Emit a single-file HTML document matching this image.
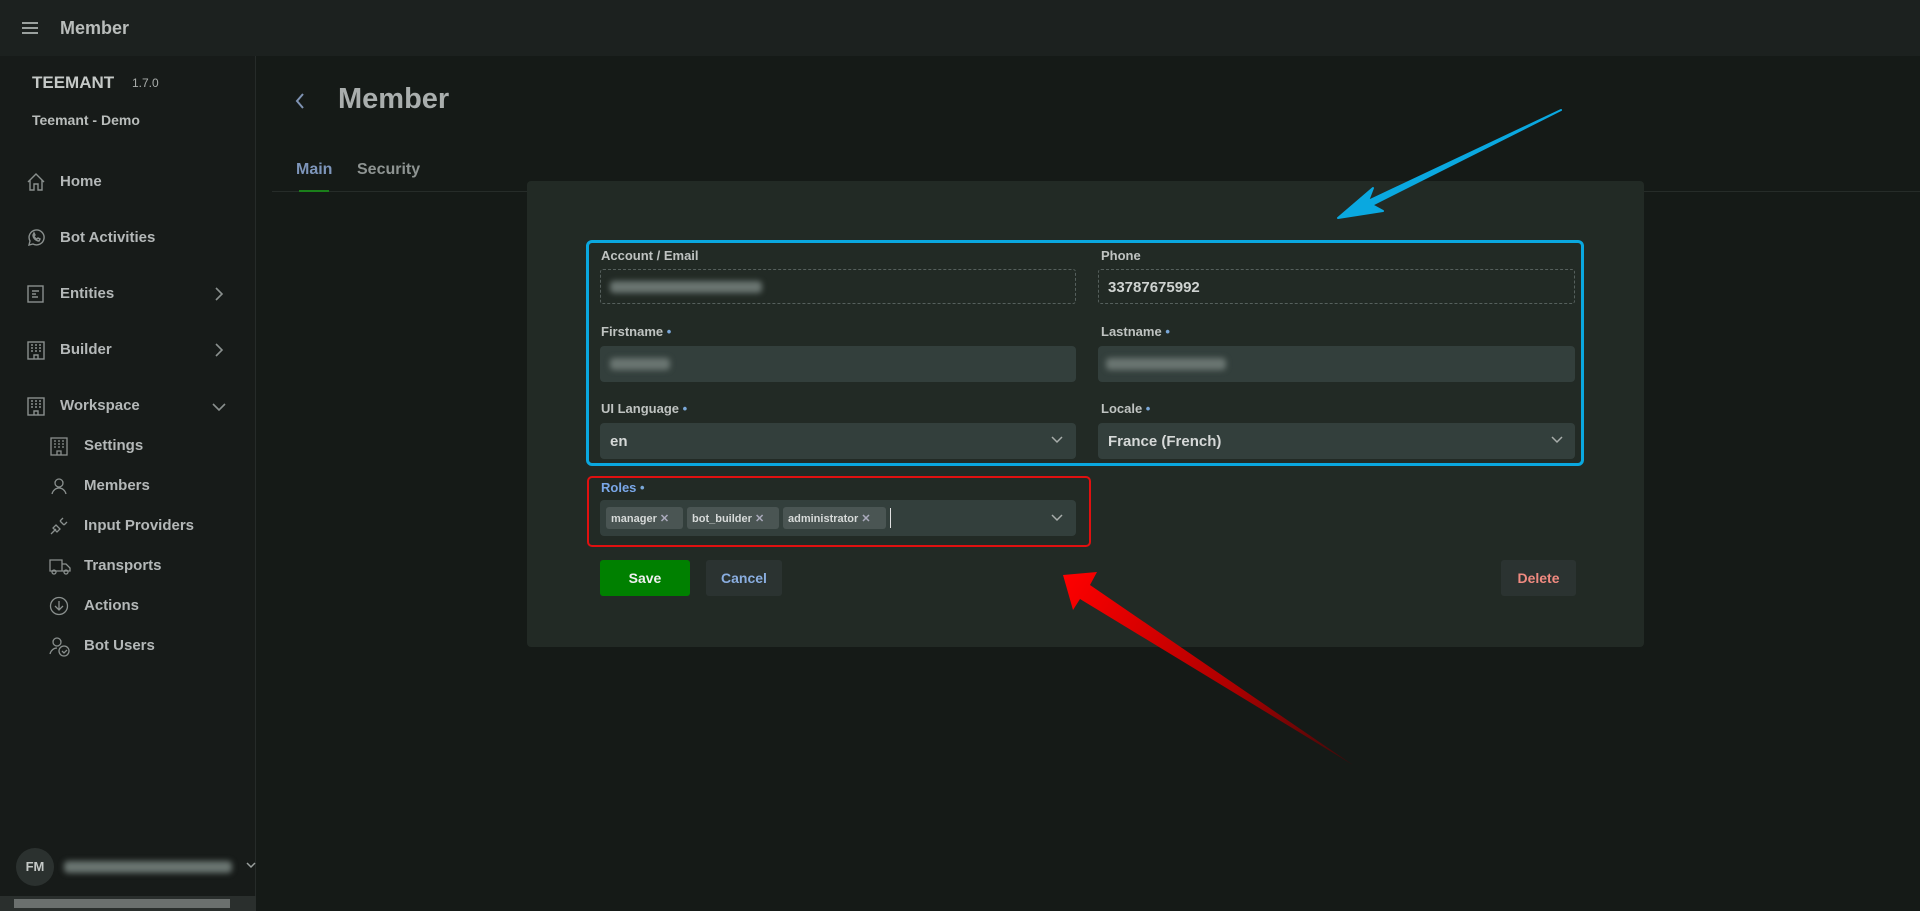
<!DOCTYPE html>
<html><head><meta charset="utf-8"><style>
*{box-sizing:border-box;margin:0;padding:0}
body{width:1920px;height:911px;overflow:hidden;background:#151a17;font-family:"Liberation Sans",sans-serif;color:#b9bdbb;position:relative}
.abs{position:absolute}
.top{left:0;top:0;width:1920px;height:56px;background:#1c211f}
.side{left:0;top:56px;width:256px;height:855px;background:#171b19;border-right:1px solid #262b29}
.nav{position:absolute;left:60px;font-size:15px;font-weight:bold;color:#b4b8b8}
.ico{position:absolute;left:26px}
.sub{position:absolute;left:84px;font-size:15px;font-weight:bold;color:#b4b8b8}
.sico{position:absolute;left:49px}
.lbl{position:absolute;font-size:13px;font-weight:bold;color:#bfc3c1}
.lbl i{font-style:normal;color:#7aa7d8}
.inp{position:absolute;height:36px;background:#333f3c;border-radius:4px;font-size:15px;font-weight:bold;color:#d6d9d8;padding:10px 10px}
.blur{position:absolute;height:12px;background:#6a7571;filter:blur(3px);border-radius:4px}
.chip{position:absolute;top:507px;height:22px;background:#4a5553;border-radius:3px;font-size:11px;font-weight:bold;color:#d7dad9;padding:5px 5px;white-space:nowrap}
.btn{position:absolute;top:560px;height:36px;border-radius:3px;font-size:14px;font-weight:bold;text-align:center;line-height:36px}
</style></head><body>
<div class="abs top"></div>
<svg class="abs" style="left:22px;top:21px" width="16" height="14"><path d="M0 2h16M0 7h16M0 12h16" stroke="#9aa09e" stroke-width="2"/></svg>
<div class="abs" style="left:60px;top:18px;font-size:18px;font-weight:bold;color:#b9bdbb">Member</div>
<div class="abs side"></div>
<div class="abs" style="left:32px;top:73px;font-size:17px;font-weight:bold;color:#c5c9c7">TEEMANT</div>
<div class="abs" style="left:132px;top:76px;font-size:12px;color:#a9adab">1.7.0</div>
<div class="abs" style="left:32px;top:112px;font-size:14px;font-weight:bold;color:#b9bdbb">Teemant - Demo</div>

<svg class="ico" style="top:172px" width="20" height="20" fill="none" stroke="#8a908e" stroke-width="1.4"><path d="M2 10L10 2l8 8M4 8v10h4v-6h4v6h4V8"/></svg>
<div class="nav" style="top:173px">Home</div>
<svg class="ico" style="top:228px" width="20" height="20" fill="none" stroke="#8a908e" stroke-width="1.4"><path d="M3 17l1-4a7.5 7.5 0 1 1 3 3z"/><path d="M7 7c0 3 3 6 6 6l1-2-2-1-1 1c-1 0-3-2-3-3l1-1-1-2z"/></svg>
<div class="nav" style="top:229px">Bot Activities</div>
<svg class="ico" style="top:284px" width="20" height="20" fill="none" stroke="#8a908e" stroke-width="1.4"><rect x="2" y="2" width="15" height="16"/><path d="M6 7h7M6 10h4M6 13h6"/></svg>
<div class="nav" style="top:285px">Entities</div>
<svg class="ico" style="top:340px" width="20" height="20" fill="none" stroke="#8a908e" stroke-width="1.4"><rect x="2" y="2" width="16" height="17"/><path d="M5 5h2M9 5h2M13 5h2M5 8h2M9 8h2M13 8h2M5 11h2M9 11h2M13 11h2M8 19v-4h4v4"/></svg>
<div class="nav" style="top:341px">Builder</div>
<svg class="ico" style="top:396px" width="20" height="20" fill="none" stroke="#8a908e" stroke-width="1.4"><rect x="2" y="2" width="16" height="17"/><path d="M5 5h2M9 5h2M13 5h2M5 8h2M9 8h2M13 8h2M5 11h2M9 11h2M13 11h2M8 19v-4h4v4"/></svg>
<div class="nav" style="top:397px">Workspace</div>
<svg class="abs" style="left:214px;top:287px" width="10" height="14" fill="none" stroke="#8a908e" stroke-width="1.6"><path d="M2 1l6 6-6 6"/></svg>
<svg class="abs" style="left:214px;top:343px" width="10" height="14" fill="none" stroke="#8a908e" stroke-width="1.6"><path d="M2 1l6 6-6 6"/></svg>
<svg class="abs" style="left:212px;top:402px" width="14" height="10" fill="none" stroke="#8a908e" stroke-width="1.6"><path d="M1 2l6 6 6-6"/></svg>

<svg class="sico" style="top:436px" width="20" height="20" fill="none" stroke="#8a908e" stroke-width="1.3"><rect x="2" y="2" width="16" height="17"/><path d="M5 5h2M9 5h2M13 5h2M5 8h2M9 8h2M13 8h2M5 11h2M9 11h2M13 11h2M8 19v-4h4v4"/></svg>
<div class="sub" style="top:437px">Settings</div>
<svg class="sico" style="top:476px" width="20" height="20" fill="none" stroke="#8a908e" stroke-width="1.3"><circle cx="10" cy="7" r="4"/><path d="M3 18c1-4 4-6 7-6s6 2 7 6"/></svg>
<div class="sub" style="top:477px">Members</div>
<svg class="sico" style="top:516px" width="20" height="20" fill="none" stroke="#8a908e" stroke-width="1.3"><path d="M2 18l5-5M7 9l4 4-3 3-4-4zM11 5l4 4M14 2l-3 3M18 6l-3 3"/></svg>
<div class="sub" style="top:517px">Input Providers</div>
<svg class="sico" style="top:556px" width="22" height="20" fill="none" stroke="#8a908e" stroke-width="1.3"><path d="M1 4h12v11H1zM13 8h4l4 4v3h-8"/><circle cx="5" cy="16" r="2"/><circle cx="17" cy="16" r="2"/></svg>
<div class="sub" style="top:557px">Transports</div>
<svg class="sico" style="top:596px" width="20" height="20" fill="none" stroke="#8a908e" stroke-width="1.3"><circle cx="10" cy="10" r="8.5"/><path d="M10 5v9M6 10l4 4 4-4"/></svg>
<div class="sub" style="top:597px">Actions</div>
<svg class="sico" style="top:636px" width="22" height="22" fill="none" stroke="#8a908e" stroke-width="1.3"><circle cx="8" cy="6" r="4"/><path d="M1 18c1-4 4-6 7-6"/><circle cx="15" cy="15" r="5"/><path d="M13 15l2 2 3-3"/></svg>
<div class="sub" style="top:637px">Bot Users</div>

<div class="abs" style="left:16px;top:848px;width:38px;height:38px;border-radius:50%;background:#2b312f;font-size:13px;font-weight:bold;line-height:38px;text-align:center;color:#c5c9c7">FM</div>
<div class="blur" style="left:64px;top:861px;width:168px"></div>
<svg class="abs" style="left:246px;top:862px" width="10" height="8" fill="none" stroke="#9aa09e" stroke-width="1.5"><path d="M1 1l4 4 4-4"/></svg>
<div class="abs" style="left:0;top:896px;width:256px;height:15px;background:#2a2f2d"></div>
<div class="abs" style="left:14px;top:899px;width:216px;height:9px;background:#6b706e"></div>

<svg class="abs" style="left:294px;top:92px" width="12" height="18" fill="none" stroke="#7f93b3" stroke-width="2"><path d="M9 2l-6 7 6 7"/></svg>
<div class="abs" style="left:338px;top:83px;font-size:29px;font-weight:bold;color:#a9aead">Member</div>
<div class="abs" style="left:296px;top:161px;font-size:16px;font-weight:bold;color:#7d95ba">Main</div>
<div class="abs" style="left:357px;top:161px;font-size:16px;font-weight:bold;color:#8e9492">Security</div>
<div class="abs" style="left:272px;top:191px;width:1648px;height:1px;background:#262c29"></div>
<div class="abs" style="left:299px;top:190px;width:30px;height:2px;background:#1a7f1a"></div>

<div class="abs" style="left:527px;top:181px;width:1117px;height:466px;background:#222a25;border-radius:4px"></div>

<div class="abs" style="left:586px;top:240px;width:998px;height:226px;border:3px solid #0aa8e0;border-radius:6px"></div>
<div class="lbl" style="left:601px;top:248px">Account / Email</div>
<div class="abs" style="left:600px;top:269px;width:476px;height:35px;border:1px dashed #56605d;border-radius:3px"></div>
<div class="blur" style="left:610px;top:281px;width:152px"></div>
<div class="lbl" style="left:1101px;top:248px">Phone</div>
<div class="abs" style="left:1098px;top:269px;width:477px;height:35px;border:1px dashed #56605d;border-radius:3px;font-size:15px;font-weight:bold;color:#cfd3d1;padding:9px 9px">33787675992</div>

<div class="lbl" style="left:601px;top:324px">Firstname <i>•</i></div>
<div class="inp" style="left:600px;top:346px;width:476px"></div>
<div class="blur" style="left:610px;top:358px;width:60px"></div>
<div class="lbl" style="left:1101px;top:324px">Lastname <i>•</i></div>
<div class="inp" style="left:1098px;top:346px;width:477px"></div>
<div class="blur" style="left:1106px;top:358px;width:120px"></div>

<div class="lbl" style="left:601px;top:401px">UI Language <i>•</i></div>
<div class="inp" style="left:600px;top:423px;width:476px">en</div>
<div class="lbl" style="left:1101px;top:401px">Locale <i>•</i></div>
<div class="inp" style="left:1098px;top:423px;width:477px">France (French)</div>
<svg class="abs" style="left:1051px;top:436px" width="12" height="8" fill="none" stroke="#a8adab" stroke-width="1.5"><path d="M1 1l5 5 5-5"/></svg>
<svg class="abs" style="left:1551px;top:436px" width="12" height="8" fill="none" stroke="#a8adab" stroke-width="1.5"><path d="M1 1l5 5 5-5"/></svg>

<div class="abs" style="left:587px;top:476px;width:504px;height:71px;border:2px solid #e01010;border-radius:5px"></div>
<div class="lbl" style="left:601px;top:480px;color:#7aa7e8">Roles <i>•</i></div>
<div class="inp" style="left:600px;top:500px;width:476px"></div>
<div class="chip" style="left:606px;width:77px">manager <span style="color:#aab">✕</span></div>
<div class="chip" style="left:687px;width:92px">bot_builder <span style="color:#aab">✕</span></div>
<div class="chip" style="left:783px;width:103px">administrator <span style="color:#aab">✕</span></div>
<div class="abs" style="left:890px;top:508px;width:1px;height:20px;background:#e0e0e0"></div>
<svg class="abs" style="left:1051px;top:514px" width="12" height="8" fill="none" stroke="#a8adab" stroke-width="1.5"><path d="M1 1l5 5 5-5"/></svg>

<div class="btn" style="left:600px;width:90px;background:#008000;color:#f0f0f0">Save</div>
<div class="btn" style="left:706px;width:76px;background:#2b3331;color:#8aaee0">Cancel</div>
<div class="btn" style="left:1501px;width:75px;background:#2b3331;color:#f08a80">Delete</div>

<svg class="abs" style="left:0;top:0" width="1920" height="911">
<defs><linearGradient id="rg" x1="1063" y1="575" x2="1353" y2="765" gradientUnits="userSpaceOnUse"><stop offset="0" stop-color="#f00"/><stop offset="0.6" stop-color="#a00"/><stop offset="1" stop-color="#3a0a0a"/></linearGradient></defs>
<polygon points="1063,575 1097,572 1090,585 1353,765 1080,599 1073,610" fill="url(#rg)"/>
<polygon points="1561,110 1368,201 1373,188 1338,218 1383,211 1372,205" fill="#0aa8e0" stroke="#0aa8e0" stroke-width="2" stroke-linejoin="round"/>
</svg>
</body></html>
